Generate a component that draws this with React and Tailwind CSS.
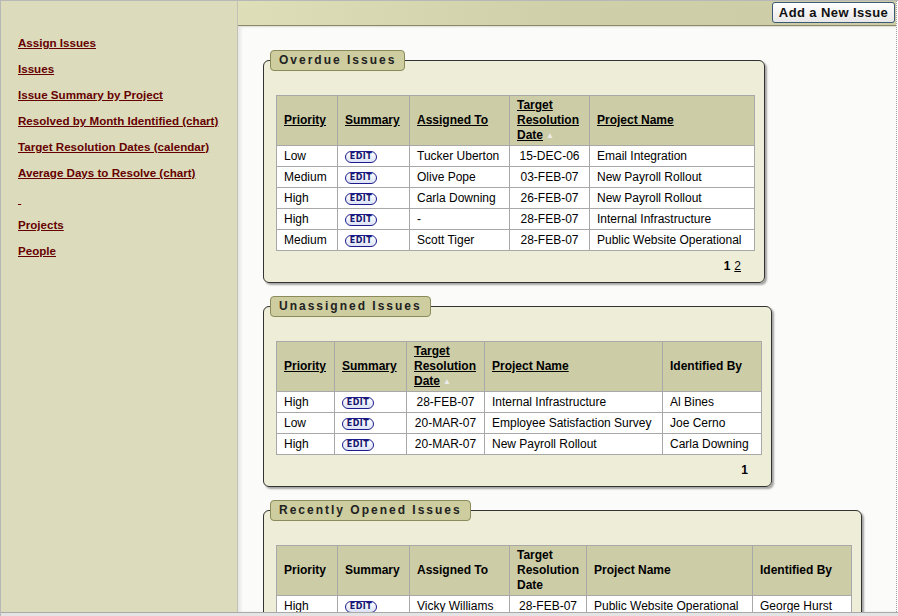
import React from 'react';

const links = [
  'Assign Issues',
  'Issues',
  'Issue Summary by Project',
  'Resolved by Month Identified (chart)',
  'Target Resolution Dates (calendar)',
  'Average Days to Resolve (chart)',
  '\u00a0',
  'Projects',
  'People',
];

const overdue = {
  title: 'Overdue Issues',
  width: 'w-[478px]',
  cols: [
    { label: 'Priority', w: 'w-[61px]', link: true },
    { label: 'Summary', w: 'w-[72px]', link: true },
    { label: 'Assigned To', w: 'w-[100px]', link: true },
    { label: 'Target Resolution Date', w: 'w-[80px]', link: true, arrow: true, center: true },
    { label: 'Project Name', w: 'w-[165px]', link: true },
  ],
  rows: [
    ['Low', 'EDIT', 'Tucker Uberton', '15-DEC-06', 'Email Integration'],
    ['Medium', 'EDIT', 'Olive Pope', '03-FEB-07', 'New Payroll Rollout'],
    ['High', 'EDIT', 'Carla Downing', '26-FEB-07', 'New Payroll Rollout'],
    ['High', 'EDIT', '-', '28-FEB-07', 'Internal Infrastructure'],
    ['Medium', 'EDIT', 'Scott Tiger', '28-FEB-07', 'Public Website Operational'],
  ],
  pages: ['1', '2'],
};

const unassigned = {
  title: 'Unassigned Issues',
  width: 'w-[485px]',
  cols: [
    { label: 'Priority', w: 'w-[58px]', link: true },
    { label: 'Summary', w: 'w-[72px]', link: true },
    { label: 'Target Resolution Date', w: 'w-[78px]', link: true, arrow: true, center: true },
    { label: 'Project Name', w: 'w-[178px]', link: true },
    { label: 'Identified By', w: 'w-[99px]' },
  ],
  rows: [
    ['High', 'EDIT', '28-FEB-07', 'Internal Infrastructure', 'Al Bines'],
    ['Low', 'EDIT', '20-MAR-07', 'Employee Satisfaction Survey', 'Joe Cerno'],
    ['High', 'EDIT', '20-MAR-07', 'New Payroll Rollout', 'Carla Downing'],
  ],
  pages: ['1'],
};

const recent = {
  title: 'Recently Opened Issues',
  width: 'w-[575px]',
  cols: [
    { label: 'Priority', w: 'w-[61px]' },
    { label: 'Summary', w: 'w-[72px]' },
    { label: 'Assigned To', w: 'w-[100px]' },
    { label: 'Target Resolution Date', w: 'w-[77px]', center: true },
    { label: 'Project Name', w: 'w-[166px]' },
    { label: 'Identified By', w: 'w-[99px]' },
  ],
  rows: [
    ['High', 'EDIT', 'Vicky Williams', '28-FEB-07', 'Public Website Operational', 'George Hurst'],
    ['High', 'EDIT', 'Tucker Uberton', '28-FEB-07', 'New Payroll Rollout', 'Carla Downing'],
  ],
  pages: null,
};

function EditButton() {
  return (
    <span className="inline-flex h-[12px] w-[32px] items-center justify-center rounded-full border-[1.5px] border-[#1c1c8c] bg-gradient-to-b from-white to-[#dde3f6] align-middle font-['DejaVu_Sans',sans-serif] text-[8px] font-bold leading-none tracking-[0.5px] text-[#16166e]">
      EDIT
    </span>
  );
}

function IssueBox({ data }) {
  return (
    <fieldset className="w-fit min-w-0 rounded-[6px] border border-[#333] bg-[#ededd8] pl-[6px] pr-[9px] shadow-[2px_2px_2px_rgba(0,0,0,0.35)]">
      <legend className="h-[21px] rounded-[4px] border border-[#8a8a5a] bg-[#cdcd9f] px-[8px] text-[12px] font-bold leading-[19px] tracking-[2px] text-[#222]">
        {data.title}
      </legend>
      <div className="pl-[6px] pt-[24px]">
        <table className={`table-fixed border-collapse ${data.width}`}>
          <colgroup>
            {data.cols.map((c) => (
              <col key={c.label} className={c.w} />
            ))}
          </colgroup>
          <thead>
            <tr>
              {data.cols.map((c) => (
                <th
                  key={c.label}
                  className="h-[50px] border border-[#a8a8a8] bg-[#cccca7] px-[7px] text-left align-middle text-[12px] font-bold leading-[15px] text-black"
                >
                  <span className={c.link ? 'underline' : ''}>{c.label}</span>
                  {c.arrow && (
                    <span className="ml-[3px] inline-block align-[1px] text-[8px] leading-none text-[#ececec]">▲</span>
                  )}
                </th>
              ))}
            </tr>
          </thead>
          <tbody>
            {data.rows.map((r, i) => (
              <tr key={i}>
                {r.map((v, j) => (
                  <td
                    key={j}
                    className={`h-[21px] whitespace-nowrap border border-[#a8a8a8] bg-white px-[7px] py-0 text-[12px] leading-[14px] text-black ${
                      data.cols[j].center ? 'text-center' : 'text-left'
                    }`}
                  >
                    {v === 'EDIT' ? <EditButton /> : v}
                  </td>
                ))}
              </tr>
            ))}
          </tbody>
        </table>
        {data.pages ? (
          <div className="flex h-[31px] items-center justify-end gap-[4px] pr-[14px] pb-[2px] text-[12px] text-black">
            {data.pages.map((p, i) =>
              i === 0 ? (
                <span key={p} className="font-bold">{p}</span>
              ) : (
                <span key={p} className="underline">{p}</span>
              )
            )}
          </div>
        ) : (
          <div className="h-[31px]" />
        )}
      </div>
    </fieldset>
  );
}

export default function App() {
  return (
    <div className="h-[616px] w-[898px] overflow-hidden border-l border-t border-[#b8b8b8] bg-[#e4e4e4] font-['Liberation_Sans',Arial,sans-serif]">
      <div className="flex h-[612px] border-b border-[#a9a9a9]">
        <aside className="w-[237px] shrink-0 border-r border-[#c2c2b6] bg-[#dcdcbd] pl-[17px] pt-[29px]">
          {links.map((l, i) => (
            <a
              key={i}
              href="#"
              className="block h-[26px] text-[11.6px] font-bold leading-[26px] text-[#660000] underline"
            >
              {l}
            </a>
          ))}
        </aside>
        <div className="flex min-w-0 flex-1 flex-col">
          <div className="flex h-[25px] shrink-0 justify-end border-b border-[#8a8a6a] bg-gradient-to-r from-[#dedeb8] via-[#cfcfa9] to-[#cccca6]">
            <button className="mr-[1px] mt-[1px] h-[21px] w-[123px] rounded-[3px] border border-[#3c5a78] bg-gradient-to-b from-white to-[#e8e8e8] text-[13px] font-bold tracking-[0.4px] text-[#111]">
              Add a New Issue
            </button>
          </div>
          <div className="flex min-h-0 flex-1 flex-col gap-[13px] overflow-hidden border-t border-[#e2e2dc] bg-[#fbfcfa] pl-[25px] pt-[23px] shadow-[inset_3px_0_3px_rgba(0,0,0,0.08)]">
            <IssueBox data={overdue} />
            <IssueBox data={unassigned} />
            <IssueBox data={recent} />
          </div>
        </div>
        <div className="w-[2px] shrink-0 border-l border-dotted border-[#9a9a9a] bg-white" />
      </div>
    </div>
  );
}
